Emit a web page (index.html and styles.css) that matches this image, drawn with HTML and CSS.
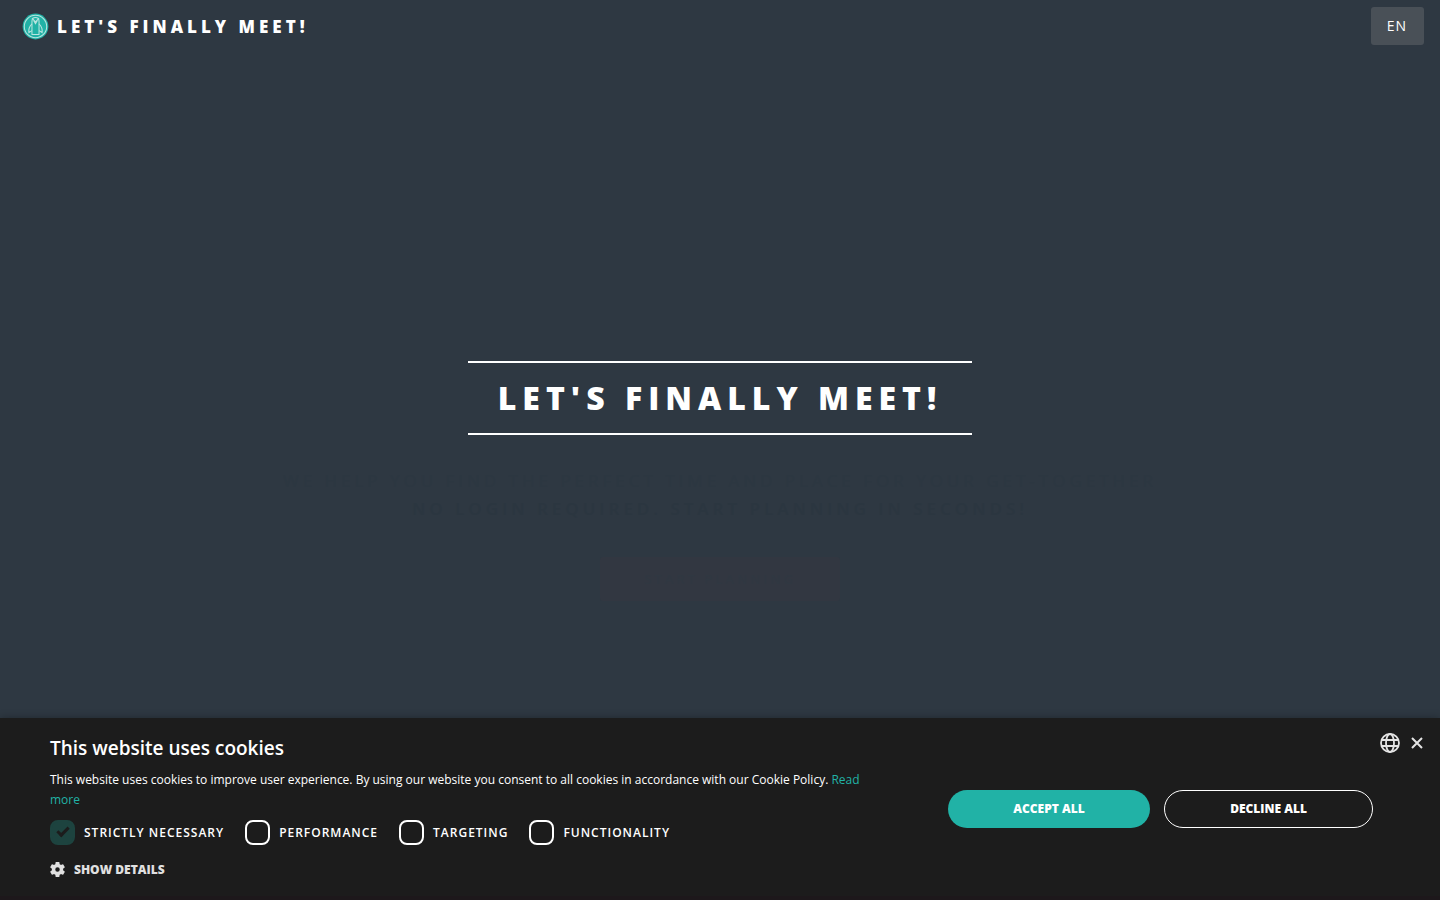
FILE: index.html
```html
<!DOCTYPE html>
<html lang="en">
<head>
<meta charset="utf-8">
<meta name="viewport" content="width=device-width, initial-scale=1">
<title>Let's finally meet!</title>
<link rel="stylesheet" href="styles.css">
</head>
<body>
<div class="page">
  <header class="topbar">
    <a class="brand" href="#">
      <svg class="brand-logo" viewBox="0 0 26 26" aria-hidden="true">
        <circle cx="13" cy="13" r="12.4" fill="#21b2a6"/>
        <g fill="none" stroke="#b9e4df" stroke-width="1">
          <circle cx="13" cy="13" r="10.8"/>
          <path d="M9.6 20.8V8Q9.6 4.3 13 4.3Q16.4 4.3 16.4 8V20.8Z"/>
          <path d="M9.6 5L13 8.6L16.4 5M11.2 7.2L13 10.3L14.8 7.2"/>
          <path d="M9.6 10.5Q6 14 6.6 18.8L9.6 17M16.4 10.5Q20 14 19.4 18.8L16.4 17"/>
        </g>
      </svg>
      <span>Let's finally meet!</span>
    </a>
    <button class="lang" type="button">EN</button>
  </header>
  <main class="hero">
    <h1 class="hero-title">Let's finally meet!</h1>
    <p class="hero-text">We help you find the perfect time and place for your get-together<br><strong>No login required. Start planning in seconds!</strong></p>
    <a class="hero-action" href="#">Start planning</a>
  </main>
</div>
<section class="cookies" aria-labelledby="cookies-title">
  <div class="cookies-tools">
    <button class="tool" type="button" aria-label="Language">
      <svg width="20" height="20" viewBox="0 0 20 20" fill="none" stroke="#e4e4e4" stroke-width="1.8">
        <circle cx="10" cy="10" r="9"/><ellipse cx="10" cy="10" rx="4" ry="9"/><path d="M1.6 7H18.4M1.6 13H18.4"/>
      </svg>
    </button>
    <button class="tool" type="button" aria-label="Close">
      <svg width="12" height="12" viewBox="0 0 12 12" fill="none" stroke="#e4e4e4" stroke-width="2"><path d="M1 1L11 11M11 1L1 11"/></svg>
    </button>
  </div>
  <div class="cookies-body">
    <div class="cookies-info">
      <h2 class="cookies-title" id="cookies-title">This website uses cookies</h2>
      <p class="cookies-text">This website uses cookies to improve user experience. By using our website you consent to all cookies in accordance with our Cookie Policy. <a href="#">Read more</a></p>
      <div class="options">
        <label class="option"><input type="checkbox" checked disabled><span>Strictly necessary</span></label>
        <label class="option"><input type="checkbox"><span>Performance</span></label>
        <label class="option"><input type="checkbox"><span>Targeting</span></label>
        <label class="option"><input type="checkbox"><span>Functionality</span></label>
      </div>
      <button class="details" type="button">
        <svg width="15" height="15" viewBox="2 2 20 20" aria-hidden="true"><path fill="#e0e0e0" d="M19.43 12.98c.04-.32.07-.64.07-.98s-.03-.66-.07-.98l2.11-1.65c.19-.15.24-.42.12-.64l-2-3.46c-.12-.22-.39-.3-.61-.22l-2.49 1c-.52-.4-1.08-.73-1.69-.98l-.38-2.65C14.46 2.18 14.25 2 14 2h-4c-.25 0-.46.18-.49.42l-.38 2.65c-.61.25-1.17.59-1.69.98l-2.49-1c-.23-.09-.49 0-.61.22l-2 3.46c-.13.22-.07.49.12.64l2.11 1.65c-.04.32-.07.65-.07.98s.03.66.07.98l-2.11 1.65c-.19.15-.24.42-.12.64l2 3.46c.12.22.39.3.61.22l2.49-1c.52.4 1.08.73 1.69.98l.38 2.65c.03.24.24.42.49.42h4c.25 0 .46-.18.49-.42l.38-2.65c.61-.25 1.17-.59 1.69-.98l2.49 1c.23.09.49 0 .61-.22l2-3.46c.12-.22.07-.49-.12-.64zM12 15a3 3 0 1 1 0-6 3 3 0 0 1 0 6z"/></svg>
        <span>Show details</span>
      </button>
    </div>
    <div class="actions">
      <button class="pill pill-accept" type="button">Accept all</button>
      <button class="pill pill-decline" type="button">Decline all</button>
    </div>
  </div>
</section>
</body>
</html>
```
FILE: styles.css
```css
*, *::before { box-sizing: border-box; }
body {
  margin: 0;
  min-height: 100vh;
  display: flex;
  flex-direction: column;
  background: #2e3842;
  color: #fff;
  font-family: "Open Sans", sans-serif;
}
button { font-family: inherit; color: inherit; border: 0; background: none; padding: 0; cursor: pointer; }
a { text-decoration: none; }

.page { flex: 1; display: flex; flex-direction: column; }
.topbar { display: flex; align-items: center; justify-content: space-between; height: 52px; padding: 0 16px 0 22px; }
.brand { display: flex; align-items: center; gap: 8px; color: #fff; font-size: 17px; font-weight: 800; letter-spacing: 4px; text-transform: uppercase; }
.brand-logo { width: 27px; height: 27px; }
.lang { height: 38px; padding: 0 17px 0 16px; border-radius: 3px; background: #495057; font-size: 14px; line-height: 20px; letter-spacing: 1px; }

.hero { flex: 1; display: flex; flex-direction: column; align-items: center; justify-content: center; padding-top: 191px; text-align: center; text-transform: uppercase; }
.hero-title { margin: 0; padding: 0 30px; border: solid #fff; border-width: 2px 0; font-size: 32px; line-height: 70px; font-weight: 800; letter-spacing: 6px; }
.hero-text { margin: 32px 0 34px; color: #2c3741; font-size: 17px; line-height: 28px; letter-spacing: 4px; }
.hero-text strong { font-weight: 600; color: #2b3640; }
.hero-action { min-width: 240px; padding: 0 36px; border-radius: 3px; background: #323741; color: #303842; font-size: 13px; line-height: 44px; font-weight: 600; letter-spacing: 3px; }

.cookies { position: relative; background: #1c1c1c; border-bottom: 4px solid #1d181b; box-shadow: 0 0 8px rgba(0, 0, 0, 0.3); }
.cookies-tools { position: absolute; top: 15px; right: 17px; display: flex; align-items: center; gap: 11px; }
.tool { display: flex; }
.cookies-body { display: flex; align-items: center; justify-content: space-between; gap: 32px; padding: 18px 67px 17px 50px; }
.cookies-info { flex: 1; }
.cookies-title { margin: 0 0 10px; font-size: 19px; line-height: 24px; font-weight: 600; }
.cookies-text { max-width: 832px; margin: 0 0 10px; font-size: 12px; line-height: 20px; }
.cookies-text a { color: #21b2a6; }
.options { display: flex; flex-wrap: wrap; gap: 21px; margin-bottom: 14px; }
.option { display: flex; align-items: center; gap: 9px; font-size: 12px; font-weight: 600; letter-spacing: 1px; text-transform: uppercase; }
.option input { appearance: none; width: 25px; height: 25px; margin: 0; border: 2px solid #fff; border-radius: 8px; display: grid; place-items: center; }
.option input:checked { border-color: #1d433f; background: #1d433f; }
.option input:checked::before { content: ""; width: 12px; height: 7px; margin-bottom: 4px; border: solid #1c1c1c; border-width: 0 0 3px 3px; transform: rotate(-45deg); }
.details { display: flex; align-items: center; gap: 9px; height: 20px; color: #e0e0e0; font-size: 12px; font-weight: 800; text-transform: uppercase; }
.actions { display: grid; grid-template-columns: 202px 209px; gap: 14px; padding-top: 2px; }
.pill { height: 38px; border-radius: 19px; font-size: 12px; font-weight: 800; text-transform: uppercase; }
.pill-accept { background: #21b2a6; }
.pill-decline { border: 1px solid #fff; }
```
